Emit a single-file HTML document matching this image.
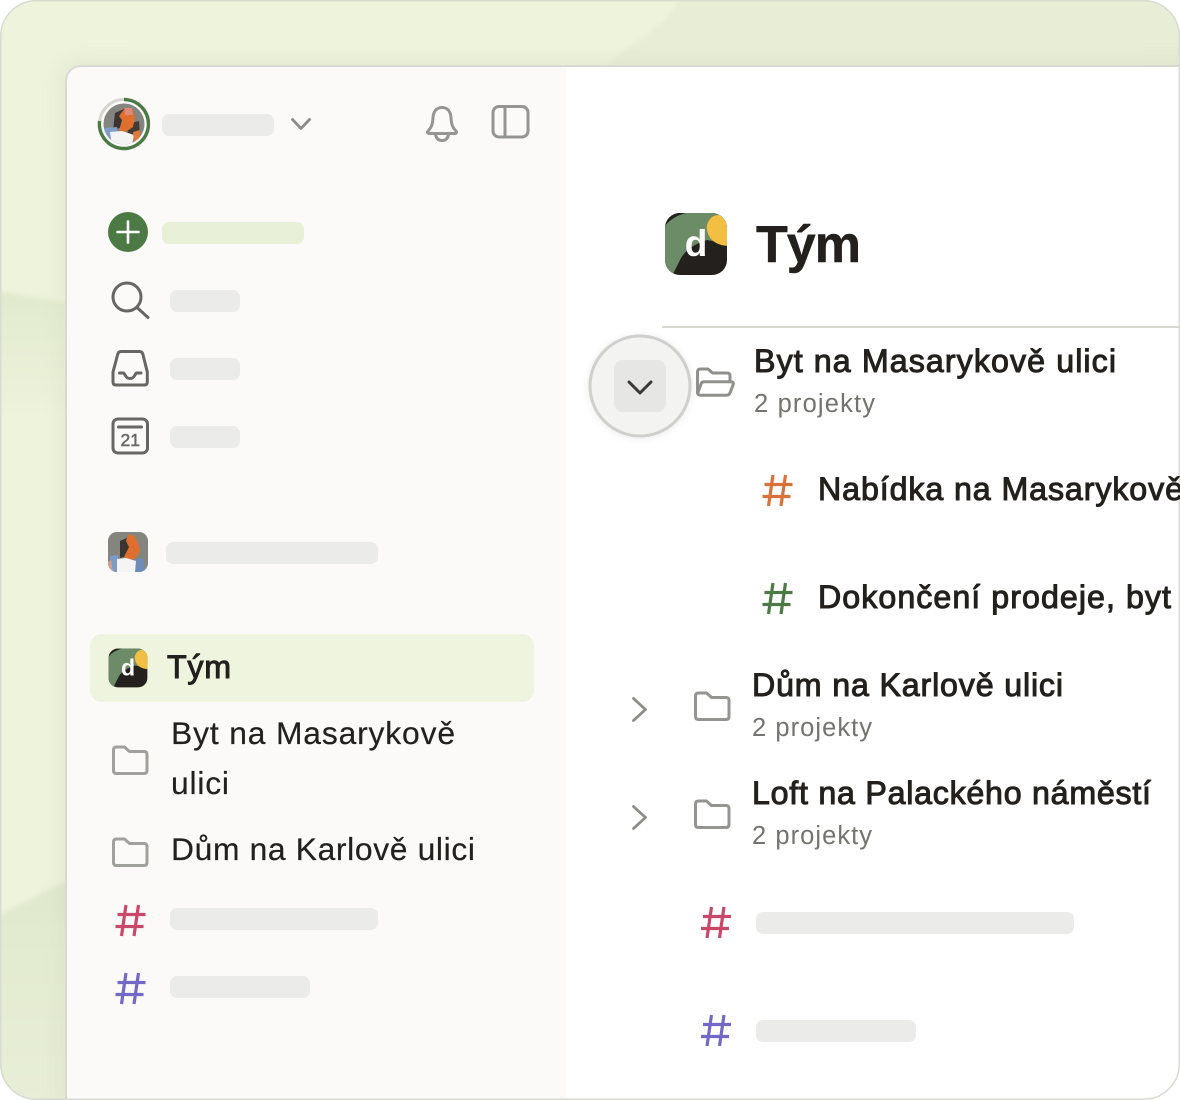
<!DOCTYPE html>
<html lang="cs">
<head>
<meta charset="utf-8">
<title>Tým</title>
<style>
html,body{margin:0;padding:0;background:#fff;width:1180px;height:1100px;overflow:hidden}
svg{display:block}
text{font-family:"Liberation Sans",sans-serif;fill:#23201d}
.h{font-size:32.200px;stroke:#23201d;stroke-width:1px}
.s{font-size:25.500px;fill:#73736f}
.r{font-size:31.800px;stroke:#23201d;stroke-width:.2px}
.i{fill:none;stroke:#676662;stroke-width:3;stroke-linecap:round;stroke-linejoin:round}
.f{fill:none;stroke:#a0a09c;stroke-width:3;stroke-linejoin:round;stroke-linecap:round}
.c{fill:none;stroke:#8c8c88;stroke-width:2.800;stroke-linecap:round;stroke-linejoin:round}
.p{fill:#ebebe9}
.hash{fill:none;stroke-width:3.200}
</style>
</head>
<body>
<svg width="1180" height="1100" viewBox="0 0 1180 1100" xmlns="http://www.w3.org/2000/svg">
<defs>
<clipPath id="outer"><rect x="0" y="0" width="1180" height="1100" rx="36"/></clipPath>
<clipPath id="win"><path d="M65 1100V81a16 16 0 0 1 16-16H1180V1100z"/></clipPath>
<clipPath id="la"><rect x="1" y="1" width="62" height="62" rx="15"/></clipPath>
<clipPath id="lb"><rect x="1" y="1" width="62" height="62" rx="15"/></clipPath>
<clipPath id="av1"><rect x="108" y="532" width="40" height="40" rx="9"/></clipPath>
<clipPath id="av2"><circle cx="124" cy="124" r="20.500"/></clipPath>
<linearGradient id="g1" x1="0" y1="0" x2="0" y2="1"><stop offset="0" stop-color="#e0e9cd"/><stop offset="1" stop-color="#eef4dc"/></linearGradient>
<linearGradient id="g2" x1="0" y1="0" x2="0" y2="1"><stop offset="0" stop-color="#dfe8cc"/><stop offset="1" stop-color="#e9efd8"/></linearGradient>
<filter id="blur" x="-30%" y="-30%" width="160%" height="160%"><feGaussianBlur stdDeviation="4"/></filter>
<filter id="soft" x="-10%" y="-10%" width="120%" height="120%"><feGaussianBlur stdDeviation="2.500"/></filter>
<filter id="wide" x="-10%" y="-10%" width="120%" height="120%"><feGaussianBlur stdDeviation="9"/></filter>
</defs>

<g clip-path="url(#outer)">
  <rect width="1180" height="1100" fill="#eef4dc"/>
  <path d="M695 -20H1200V90H570Q640 40 665 20Z" fill="#e8eed6" filter="url(#soft)"/>
  <path d="M-20 288L90 306V420H-20Z" fill="url(#g1)" filter="url(#soft)"/>
  <path d="M-20 925L90 868V1120H-20Z" fill="url(#g2)" filter="url(#soft)"/>
  <path d="M65 1120V81a16 16 0 0 1 16-16H1200" fill="none" stroke="#c8cfb4" stroke-width="10" opacity=".35" filter="url(#wide)"/>

  <g clip-path="url(#win)">
    <rect x="65" y="65" width="1115" height="1035" fill="#fff"/>
    <rect x="65" y="65" width="501" height="1035" fill="#fbfaf8"/>
  </g>
  <path d="M66 1100V81a15 15 0 0 1 15-15H1180" fill="none" stroke="#d9d9d4" stroke-width="2"/>
</g>
<rect x=".75" y=".75" width="1178.500" height="1098.500" rx="35.500" fill="none" stroke="#d8dbd0" stroke-width="1.500"/>

<!-- top sidebar -->
<circle cx="124" cy="124" r="24.500" fill="none" stroke="#d6d6d0" stroke-width="3"/>
<path d="M124 99.500A24.500 24.500 0 1 1 99.600 121" fill="none" stroke="#4b7a45" stroke-width="3.400"/>
<g clip-path="url(#av2)">
  <rect x="103" y="103" width="42" height="42" fill="#85857f"/>
  <path d="M115 113L124 109L126 126L113 130Z" fill="#3a3532"/>
  <path d="M127 124L139 121L140 136L128 136Z" fill="#3f3a36"/>
  <path d="M125 108L132 108L135 118L133 127L124 133L119 131L122 120L119 116Z" fill="#df6f2f"/>
  <path d="M125 108L132 108L133 115L125 115Z" fill="#dd8a78"/>
  <path d="M103 128L117 127L119 145H103Z" fill="#7f9dc9"/>
  <path d="M110 132L122 131L134 135L132 145H112Z" fill="#f3f3f3"/>
  <path d="M133 132L140 130L140 142L134 142Z" fill="#e07a3a"/>
</g>
<rect x="162" y="114" width="112" height="22" rx="7" class="p"/>
<path d="M292.500 119.500L301 128.500L309.500 119.500" class="c"/>

<path d="M442 107.500c-5.500 0-8.500 4-9 10c-.4 6-1 9.500-5 13.500c-1 1.200-.4 2.500 1 2.500h26c1.400 0 2-1.300 1-2.500c-4-4-4.600-7.500-5-13.500c-.5-6-3.500-10-9-10zM435.500 134c.5 4.500 3 6.500 6.500 6.500s6-2 6.500-6.500" fill="none" stroke="#959593" stroke-width="3" stroke-linejoin="round"/>
<rect x="493" y="106.500" width="35" height="30.500" rx="6" fill="none" stroke="#959593" stroke-width="3"/>
<path d="M505 107V136" stroke="#959593" stroke-width="3"/>

<!-- plus -->
<circle cx="128" cy="232" r="20" fill="#4b7a45"/>
<path d="M128 221.500V242.500M117.500 232H138.500" stroke="#fff" stroke-width="2.600" stroke-linecap="round"/>
<rect x="162" y="222" width="142" height="22" rx="7" fill="#e9f0d8"/>

<!-- search -->
<circle cx="127" cy="297" r="14" class="i"/>
<path d="M137 307.500L148 317.500" class="i"/>
<rect x="170" y="290" width="70" height="22" rx="7" class="p"/>

<!-- inbox -->
<path d="M121 351.500H139.500Q142 351.500 142.800 354L147.300 372V382Q147.300 385 144.300 385H116Q113 385 113 382V372L117.800 354Q118.500 351.500 121 351.500Z" class="i"/>
<path d="M119.500 373H123.500C125 373 125 378.500 130 378.500S135 373 136.500 373H141" class="i"/>
<rect x="170" y="358" width="70" height="22" rx="7" class="p"/>

<!-- calendar -->
<rect x="113" y="419" width="34.500" height="34" rx="5" class="i"/>
<path d="M118.500 427H141.500" class="i"/>
<text x="120.500" y="446" font-size="17.500" textLength="19.500" lengthAdjust="spacing" style="fill:#676662;stroke:#676662;stroke-width:.5px">21</text>
<rect x="170" y="426" width="70" height="22" rx="7" class="p"/>

<!-- personal avatar -->
<g clip-path="url(#av1)">
  <rect x="108" y="532" width="40" height="40" fill="#85857f"/>
  <path d="M120 541L129 537L132 555L120 558Z" fill="#3a3532"/>
  <path d="M128 535L134 535L138 543L140 551L136 558L128 561L124 557L129 547L126 541Z" fill="#df6f2f"/>
  <path d="M110 556L118 555L120 572H110Z" fill="#7c9ac6"/>
  <path d="M134 560L143 558L146 572H134Z" fill="#6f8cb8"/>
  <path d="M117 559L126 558L136 561L135 572H117Z" fill="#f4f4f4"/>
  <path d="M108 562L111 560L113 572H108Z" fill="#d99a90"/>
</g>
<rect x="166" y="542" width="212" height="22" rx="7" class="p"/>

<!-- selected row -->
<rect x="90" y="634" width="444" height="68" rx="12" fill="#eef4dd"/>
<g transform="translate(108 648) scale(.625)">
  <g clip-path="url(#la)">
    <rect width="64" height="64" fill="#23201d"/>
    <path d="M0 0H64V32L43 28Q24 34 17 46L8 64H0Z" fill="#6c8c68"/>
    <path d="M0 15Q10 2 28 0H0Z" fill="#23201d"/>
    <path d="M43 13Q46 3 55 3Q64 3 64 13V34Q50 33 45 24Q42 18 43 13Z" fill="#f3bf42"/>
    <text x="32" y="44" font-size="37" font-weight="700" text-anchor="middle" style="fill:#fff">d</text>
  </g>
</g>
<text x="167" y="678" class="h" textLength="64" lengthAdjust="spacing">Tým</text>

<!-- folders in sidebar -->
<path d="M113.500 750q0-3 3-3h8l5 4.500h14.500q3 0 3 3v16q0 3-3 3h-27.500q-3 0-3-3z" class="f"/>
<text x="171" y="744" class="r" textLength="284" lengthAdjust="spacing">Byt na Masarykově</text>
<text x="171" y="794" class="r" textLength="58" lengthAdjust="spacing">ulici</text>
<path d="M113.500 842q0-3 3-3h8l5 4.500h14.500q3 0 3 3v16q0 3-3 3h-27.500q-3 0-3-3z" class="f"/>
<text x="171" y="860" class="r" textLength="304" lengthAdjust="spacing">Dům na Karlově ulici</text>

<path transform="translate(115.500 905)" d="M10.500 0L6 31M23 0L18.500 31M2 9.500H30M0 21.500H28" class="hash" stroke="#c9486a"/>
<rect x="170" y="908" width="208" height="22" rx="7" class="p"/>
<path transform="translate(115.500 973)" d="M10.500 0L6 31M23 0L18.500 31M2 9.500H30M0 21.500H28" class="hash" stroke="#7468c6"/>
<rect x="170" y="976" width="140" height="22" rx="7" class="p"/>

<!-- main header -->
<g transform="translate(664 212)">
  <g clip-path="url(#lb)">
    <rect width="64" height="64" fill="#23201d"/>
    <path d="M0 0H64V32L43 28Q24 34 17 46L8 64H0Z" fill="#6c8c68"/>
    <path d="M0 15Q10 2 28 0H0Z" fill="#23201d"/>
    <path d="M43 13Q46 3 55 3Q64 3 64 13V34Q50 33 45 24Q42 18 43 13Z" fill="#f3bf42"/>
    <text x="32" y="44" font-size="37" font-weight="700" text-anchor="middle" style="fill:#fff">d</text>
  </g>
</g>
<text x="756" y="262" font-size="52" font-weight="700" textLength="105" lengthAdjust="spacing" style="stroke:#23201d;stroke-width:.5px">Tým</text>
<path d="M662 327H1180" stroke="#d8d8d2" stroke-width="2"/>

<!-- expanded button -->
<circle cx="640" cy="387" r="52" fill="#000" opacity=".07" filter="url(#blur)"/>
<circle cx="640" cy="386" r="50" fill="#f3f3f1" stroke="#cfcfcb" stroke-width="3"/>
<rect x="614" y="360" width="52" height="52" rx="9" fill="#e6e6e4"/>
<path d="M629 382L640 393L651 382" fill="none" stroke="#3c3a36" stroke-width="3" stroke-linecap="round" stroke-linejoin="round"/>

<!-- open folder -->
<path d="M697.500 393V372q0-3 3-3h7.500l4.500 4h14.500q3 0 3 3v5.500" class="f" style="stroke:#8f8f8b"/>
<path d="M701 384q.8-2.300 3-2.300h26.500q3.500 0 2.700 2.800l-3 8q-1 2.700-3.700 2.700H700.500q-3 0-2.500-2.700z" class="f" style="stroke:#8f8f8b"/>

<text x="754" y="372" class="h" textLength="362" lengthAdjust="spacing">Byt na Masarykově ulici</text>
<text x="754" y="412" class="s" textLength="121" lengthAdjust="spacing">2 projekty</text>

<path transform="translate(762.500 475)" d="M10.500 0L6 31M23 0L18.500 31M2 9.500H30M0 21.500H28" class="hash" stroke="#d9713a"/>
<text x="818" y="500" class="h" textLength="365" lengthAdjust="spacing">Nabídka na Masarykově</text>
<path transform="translate(762.500 583)" d="M10.500 0L6 31M23 0L18.500 31M2 9.500H30M0 21.500H28" class="hash" stroke="#4b7a45"/>
<text x="818" y="608" class="h" textLength="353" lengthAdjust="spacing">Dokončení prodeje, byt</text>

<path d="M633.500 698.500L645.500 709.500L633.500 720.500" class="c"/>
<path d="M695.500 696q0-3 3-3h8l5 4.500h14.500q3 0 3 3v16q0 3-3 3h-27.500q-3 0-3-3z" class="f" style="stroke:#949490"/>
<text x="752" y="696" class="h" textLength="311" lengthAdjust="spacing">Dům na Karlově ulici</text>
<text x="752" y="736" class="s" textLength="120" lengthAdjust="spacing">2 projekty</text>

<path d="M633.500 806.500L645.500 817.500L633.500 828.500" class="c"/>
<path d="M695.500 804q0-3 3-3h8l5 4.500h14.500q3 0 3 3v16q0 3-3 3h-27.500q-3 0-3-3z" class="f" style="stroke:#949490"/>
<text x="752" y="804" class="h" textLength="399" lengthAdjust="spacing">Loft na Palackého náměstí</text>
<text x="752" y="844" class="s" textLength="120" lengthAdjust="spacing">2 projekty</text>

<path transform="translate(701 907)" d="M10.500 0L6 31M23 0L18.500 31M2 9.500H30M0 21.500H28" class="hash" stroke="#c9486a"/>
<rect x="756" y="912" width="318" height="22" rx="7" class="p"/>
<path transform="translate(701 1015)" d="M10.500 0L6 31M23 0L18.500 31M2 9.500H30M0 21.500H28" class="hash" stroke="#7468c6"/>
<rect x="756" y="1020" width="160" height="22" rx="7" class="p"/>
</svg>
</body>
</html>
